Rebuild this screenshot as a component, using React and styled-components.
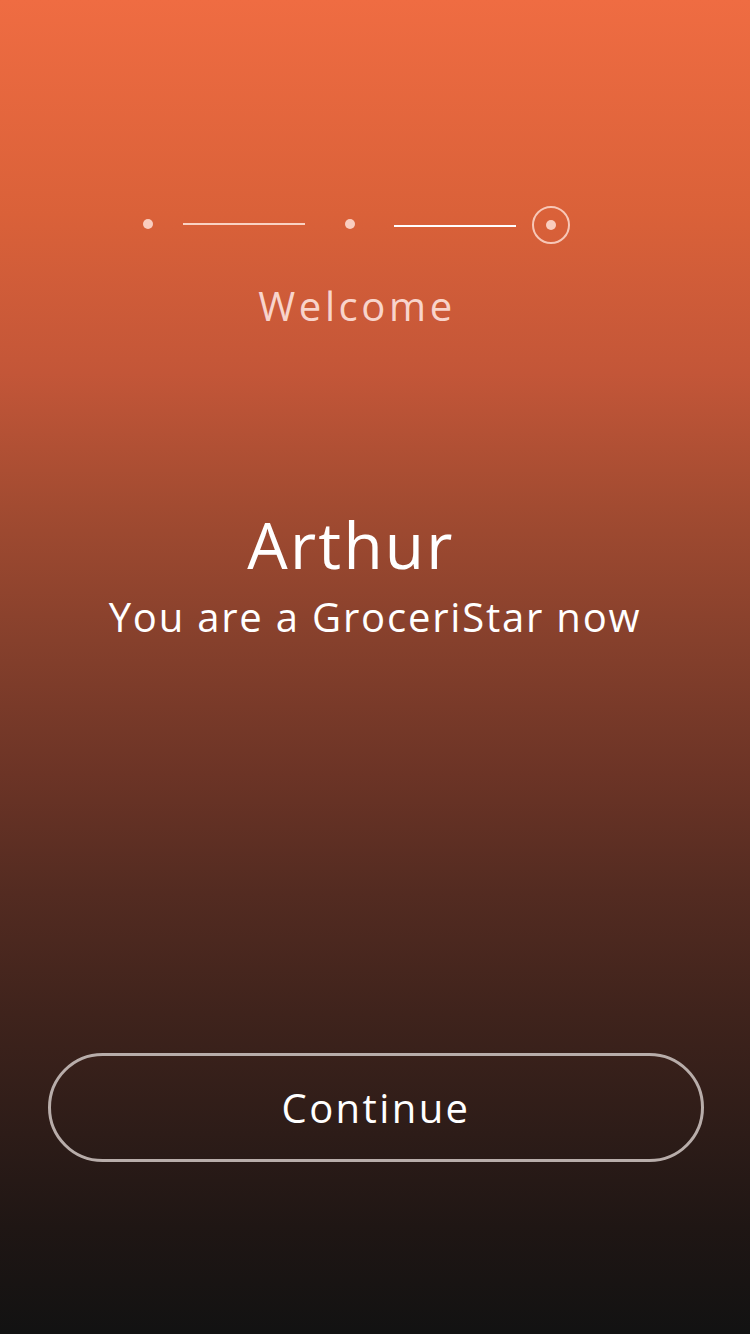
import React from 'react';
import styled, { createGlobalStyle } from 'styled-components';

const GlobalStyle = createGlobalStyle`
  html, body {
    margin: 0;
    padding: 0;
    background: #121212;
  }
  * { box-sizing: border-box; }
`;

const Screen = styled.div`
  width: 750px;
  height: 1334px;
  display: flex;
  flex-direction: column;
  align-items: center;
  font-family: 'Open Sans', 'Noto Sans', sans-serif;
  color: #ffffff;
  background: linear-gradient(
    180deg,
    #ef6c42 0%,
    #da6139 16%,
    #c35638 28%,
    #a24b31 38%,
    #86402c 48%,
    #6c3426 58%,
    #532b21 67%,
    #3f231c 76%,
    #2d1c18 85%,
    #1f1614 92%,
    #121212 100%
  );
`;

const Stepper = styled.div`
  margin: 205px 37px 0 0;
  height: 38px;
  display: flex;
  align-items: center;
`;

const Dot = styled.span`
  width: 10px;
  height: 10px;
  border-radius: 50%;
  background: rgba(255, 225, 215, 0.85);
  flex: none;
`;

const Line = styled.span`
  width: 122px;
  height: 2px;
  margin: ${p => (p.$lower ? '3px 16px 0 39px' : '-1px 40px 0 30px')};
  background: ${p => (p.$bright ? '#ffffff' : 'rgba(255, 230, 220, 0.85)')};
  flex: none;
`;

const Ring = styled.span`
  width: 38px;
  height: 38px;
  margin-top: 2px;
  border-radius: 50%;
  border: 2px solid rgba(255, 225, 215, 0.8);
  display: flex;
  align-items: center;
  justify-content: center;
  flex: none;
`;

const Title = styled.div`
  margin: 38px 36px 0 0;
  font-size: 40px;
  line-height: 50px;
  color: rgba(255, 230, 225, 0.88);
  letter-spacing: 3.6px;
`;

const Name = styled.div`
  margin-top: 174px;
  margin-right: 48px;
  font-size: 64px;
  line-height: 80px;
  font-weight: 500;
  letter-spacing: 2.2px;
`;

const Subtitle = styled.div`
  margin-top: 7px;
  font-size: 40px;
  line-height: 50px;
  letter-spacing: 1.8px;
`;

const Spacer = styled.div`
  flex: 1;
`;

const Button = styled.button`
  width: 656px;
  height: 109px;
  margin: 0 0 172px 2px;
  border-radius: 55px;
  border: 3px solid #b8adaa;
  background: transparent;
  color: #ffffff;
  font-family: inherit;
  font-size: 40px;
  letter-spacing: 2.4px;
  cursor: pointer;
`;

export default function App() {
  return (
    <>
      <GlobalStyle />
      <Screen>
        <Stepper>
          <Dot />
          <Line />
          <Dot />
          <Line $bright $lower />
          <Ring>
            <Dot />
          </Ring>
        </Stepper>
        <Title>Welcome</Title>
        <Name>Arthur</Name>
        <Subtitle>You are a GroceriStar now</Subtitle>
        <Spacer />
        <Button>Continue</Button>
      </Screen>
    </>
  );
}
